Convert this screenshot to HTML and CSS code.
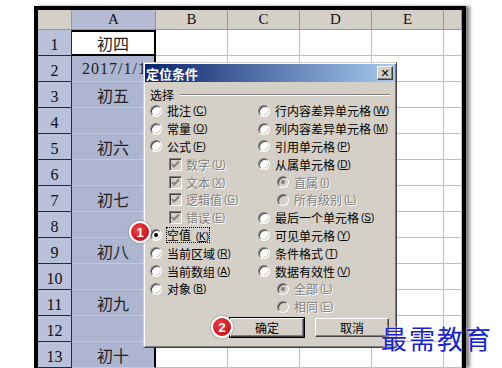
FILE: index.html
```html
<!DOCTYPE html>
<html lang="zh-CN">
<head>
    <meta charset="UTF-8">
    <title>定位条件</title>
    <link rel="stylesheet" href="styles.css">
</head>
<body>
    <div class="frame">
        <div class="sheet">
            <div class="hd corner"></div><div class="hd on">A</div><div class="hd">B</div><div class="hd">C</div><div class="hd">D</div><div class="hd">E</div><div class="hd"></div>

            <div class="rh">1</div><div class="ca first">初四</div><div class="c"></div><div class="c"></div><div class="c"></div><div class="c"></div><div class="c"></div>
            <div class="rh">2</div><div class="ca date">2017/1/1</div><div class="c"></div><div class="c"></div><div class="c"></div><div class="c"></div><div class="c"></div>
            <div class="rh">3</div><div class="ca">初五</div><div class="c"></div><div class="c"></div><div class="c"></div><div class="c"></div><div class="c"></div>
            <div class="rh">4</div><div class="ca"></div><div class="c"></div><div class="c"></div><div class="c"></div><div class="c"></div><div class="c"></div>
            <div class="rh">5</div><div class="ca">初六</div><div class="c"></div><div class="c"></div><div class="c"></div><div class="c"></div><div class="c"></div>
            <div class="rh">6</div><div class="ca"></div><div class="c"></div><div class="c"></div><div class="c"></div><div class="c"></div><div class="c"></div>
            <div class="rh">7</div><div class="ca">初七</div><div class="c"></div><div class="c"></div><div class="c"></div><div class="c"></div><div class="c"></div>
            <div class="rh">8</div><div class="ca"></div><div class="c"></div><div class="c"></div><div class="c"></div><div class="c"></div><div class="c"></div>
            <div class="rh">9</div><div class="ca">初八</div><div class="c"></div><div class="c"></div><div class="c"></div><div class="c"></div><div class="c"></div>
            <div class="rh">10</div><div class="ca"></div><div class="c"></div><div class="c"></div><div class="c"></div><div class="c"></div><div class="c"></div>
            <div class="rh">11</div><div class="ca">初九</div><div class="c"></div><div class="c"></div><div class="c"></div><div class="c"></div><div class="c"></div>
            <div class="rh">12</div><div class="ca"></div><div class="c"></div><div class="c"></div><div class="c"></div><div class="c"></div><div class="c"></div>
            <div class="rh">13</div><div class="ca">初十</div><div class="c"></div><div class="c"></div><div class="c"></div><div class="c"></div><div class="c"></div>
        </div>
    </div>

    <div class="dialog">
        <div class="titlebar">
            <span>定位条件</span>
            <span class="close">&#x2715;</span>
        </div>
        <div class="body">
            <div class="legend"><span>选择</span><i></i></div>
            <div class="cols">
                <div class="col left">
                    <div class="opt"><span class="radio"></span>批注 <span class="key">(<u>C</u>)</span></div>
                    <div class="opt"><span class="radio"></span>常量 <span class="key">(<u>O</u>)</span></div>
                    <div class="opt"><span class="radio"></span>公式 <span class="key">(<u>F</u>)</span></div>
                    <div class="opt sub off"><span class="check"><svg width="9" height="9" viewBox="0 0 9 9"><path d="M1 4 L3 6.5 L8 1.5" fill="none" stroke="#808080" stroke-width="2"/></svg></span>数字 <span class="key">(<u>U</u>)</span></div>
                    <div class="opt sub off"><span class="check"><svg width="9" height="9" viewBox="0 0 9 9"><path d="M1 4 L3 6.5 L8 1.5" fill="none" stroke="#808080" stroke-width="2"/></svg></span>文本 <span class="key">(<u>X</u>)</span></div>
                    <div class="opt sub off"><span class="check"><svg width="9" height="9" viewBox="0 0 9 9"><path d="M1 4 L3 6.5 L8 1.5" fill="none" stroke="#808080" stroke-width="2"/></svg></span>逻辑值 <span class="key">(<u>G</u>)</span></div>
                    <div class="opt sub off"><span class="check"><svg width="9" height="9" viewBox="0 0 9 9"><path d="M1 4 L3 6.5 L8 1.5" fill="none" stroke="#808080" stroke-width="2"/></svg></span>错误 <span class="key">(<u>E</u>)</span></div>
                    <div class="opt"><span class="radio on"></span><span class="focus">空值 <span class="key">(<u>K</u>)</span></span></div>
                    <div class="opt"><span class="radio"></span>当前区域 <span class="key">(<u>R</u>)</span></div>
                    <div class="opt"><span class="radio"></span>当前数组 <span class="key">(<u>A</u>)</span></div>
                    <div class="opt"><span class="radio"></span>对象 <span class="key">(<u>B</u>)</span></div>
                </div>
                <div class="col right">
                    <div class="opt"><span class="radio"></span>行内容差异单元格 <span class="key">(<u>W</u>)</span></div>
                    <div class="opt"><span class="radio"></span>列内容差异单元格 <span class="key">(<u>M</u>)</span></div>
                    <div class="opt"><span class="radio"></span>引用单元格 <span class="key">(<u>P</u>)</span></div>
                    <div class="opt"><span class="radio"></span>从属单元格 <span class="key">(<u>D</u>)</span></div>
                    <div class="opt sub off"><span class="radio on"></span>直属 <span class="key">(<u>I</u>)</span></div>
                    <div class="opt sub off"><span class="radio"></span>所有级别 <span class="key">(<u>L</u>)</span></div>
                    <div class="opt"><span class="radio"></span>最后一个单元格 <span class="key">(<u>S</u>)</span></div>
                    <div class="opt"><span class="radio"></span>可见单元格 <span class="key">(<u>Y</u>)</span></div>
                    <div class="opt"><span class="radio"></span>条件格式 <span class="key">(<u>T</u>)</span></div>
                    <div class="opt"><span class="radio"></span>数据有效性 <span class="key">(<u>V</u>)</span></div>
                    <div class="opt sub off"><span class="radio on"></span>全部 <span class="key">(<u>L</u>)</span></div>
                    <div class="opt sub off"><span class="radio"></span>相同 <span class="key">(<u>E</u>)</span></div>
                </div>
            </div>
            <div class="buttons">
                <div class="default"><button>确定</button></div>
                <button>取消</button>
            </div>
        </div>
    </div>

    <div class="badge one">1</div>
    <div class="badge two">2</div>
    <div class="mark">最需教育</div>
</body>
</html>
```

FILE: styles.css
```css
body {
    margin: 0;
    background: #fff;
    overflow: hidden;
    height: 368px;
    font-family: "Noto Sans CJK SC", sans-serif;
}

/* sheet */
.frame {
    margin: 6px 0 0 34px;
    width: 424px;
    height: 358px;
    border: 4px solid #000;
    border-bottom: none;
    box-shadow: 4px 0 3px #8a8a8a;
    overflow: hidden;
}
.sheet {
    display: grid;
    grid-template-columns: 34px 84px 72px 72px 72px 72px 18px;
    grid-template-rows: 20px repeat(13, 26px);
}
.sheet > div {
    box-sizing: border-box;
}
.hd {
    background: #d4d0c8;
    border-right: 1px solid #9a978f;
    border-bottom: 1px solid #9a978f;
    font: 15px "Liberation Serif", serif;
    display: flex;
    align-items: flex-end;
    justify-content: center;
    padding-bottom: 1px;
    color: #111;
}
.hd.on {
    background: #b4bbd3;
}
.rh {
    background: #b9c0d9;
    border-right: 1px solid #1a2a60;
    border-bottom: 1px solid #1a2a60;
    font: 16px "Liberation Serif", serif;
    display: flex;
    align-items: flex-end;
    justify-content: center;
    padding-bottom: 1px;
    color: #111;
}
.ca {
    background: #adb5d0;
    border-right: 2px solid #000;
    border-bottom: 1px solid #c3c8dc;
    display: flex;
    align-items: center;
    justify-content: center;
    font-size: 16px;
    color: #222;
    white-space: nowrap;
}
.ca.first {
    background: #fff;
    border: 2px solid #000;
    border-left: none;
}
.ca.date {
    font: 16px "Liberation Serif", serif;
    letter-spacing: 1px;
    justify-content: flex-start;
    padding-left: 10px;
    overflow: hidden;
}
.c {
    background: #fff;
    border-right: 1px solid #c0c0c0;
    border-bottom: 1px solid #c0c0c0;
}

/* dialog */
.dialog {
    position: absolute;
    left: 143px;
    top: 62px;
    width: 254px;
    height: 286px;
    box-sizing: border-box;
    background: #d4d0c8;
    border: 1px solid;
    border-color: #d4d0c8 #404040 #404040 #d4d0c8;
    box-shadow: inset 1px 1px #fff, inset -1px -1px #808080;
    padding: 1px;
    font-size: 12px;
    color: #000;
}
.titlebar {
    height: 18px;
    background: linear-gradient(to right, #0a246a, #a6caf0);
    display: flex;
    align-items: center;
    justify-content: space-between;
    color: #fff;
    font-weight: bold;
    font-size: 13px;
    padding-left: 1px;
}
.close {
    width: 16px;
    height: 14px;
    box-sizing: border-box;
    background: #d4d0c8;
    color: #000;
    font: bold 11px "DejaVu Sans", sans-serif;
    display: flex;
    align-items: center;
    justify-content: center;
    border: 1px solid;
    border-color: #fff #404040 #404040 #fff;
    box-shadow: inset -1px -1px #808080;
    margin-right: 2px;
}
.body {
    padding: 5px 5px 0 5px;
}
.legend {
    display: flex;
    align-items: center;
    height: 15px;
    gap: 6px;
}
.legend i {
    flex: 1;
    border-top: 1px solid #808080;
    border-bottom: 1px solid #fff;
}
.cols {
    display: flex;
}
.col.left {
    width: 108px;
}
.opt {
    height: 17.8px;
    display: flex;
    align-items: center;
    white-space: nowrap;
}
.key {
    font: 10px "Liberation Sans", sans-serif;
    margin-left: 2px;
}
.radio {
    width: 12px;
    height: 12px;
    box-sizing: border-box;
    border-radius: 50%;
    border: 1px solid;
    border-color: #808080 #fff #fff #808080;
    box-shadow: inset 1px 1px #404040, inset -1px -1px #d4d0c8;
    background: #fff;
    margin-right: 5px;
    display: flex;
    align-items: center;
    justify-content: center;
    flex: none;
}
.radio.on::after {
    content: "";
    width: 4px;
    height: 4px;
    border-radius: 50%;
    background: #000;
}
.check {
    width: 13px;
    height: 13px;
    box-sizing: border-box;
    border: 1px solid;
    border-color: #808080 #fff #fff #808080;
    box-shadow: inset 1px 1px #404040, inset -1px -1px #d4d0c8;
    background: #d4d0c8;
    margin-right: 4px;
    display: flex;
    align-items: center;
    justify-content: center;
    flex: none;
}
.sub {
    padding-left: 19px;
}
.off {
    color: #808080;
    text-shadow: 1px 1px #fff;
}
.off .radio {
    background: #d4d0c8;
}
.off .radio.on::after {
    background: #808080;
}
.focus {
    outline: 1px dotted #000;
    line-height: 14px;
}
.buttons {
    display: flex;
    justify-content: flex-end;
    align-items: center;
    gap: 10px;
    margin-top: 1px;
    padding-right: 1px;
}
button {
    width: 74px;
    height: 19px;
    box-sizing: border-box;
    background: #d4d0c8;
    border: 1px solid;
    border-color: #fff #404040 #404040 #fff;
    box-shadow: inset -1px -1px #808080;
    font: 12px "Noto Sans CJK SC", sans-serif;
    color: #000;
    padding: 0;
}
.default {
    border: 1px solid #000;
    display: flex;
}

/* badges and mark */
.badge {
    position: absolute;
    width: 18px;
    height: 18px;
    border-radius: 50%;
    background: radial-gradient(circle at 40% 35%, #f04040, #c00010);
    border: 2px solid #fff;
    box-shadow: 0 0 2px #666;
    color: #fff;
    font: bold 13px "Liberation Sans", sans-serif;
    display: flex;
    align-items: center;
    justify-content: center;
}
.badge.one {
    left: 129px;
    top: 221px;
}
.badge.two {
    left: 211px;
    top: 316px;
}
.mark {
    position: absolute;
    left: 381px;
    top: 320px;
    font-size: 26px;
    letter-spacing: 2px;
    color: #1a22d0;
    line-height: 36px;
    text-shadow: 0 0 2px #fff;
}
```
